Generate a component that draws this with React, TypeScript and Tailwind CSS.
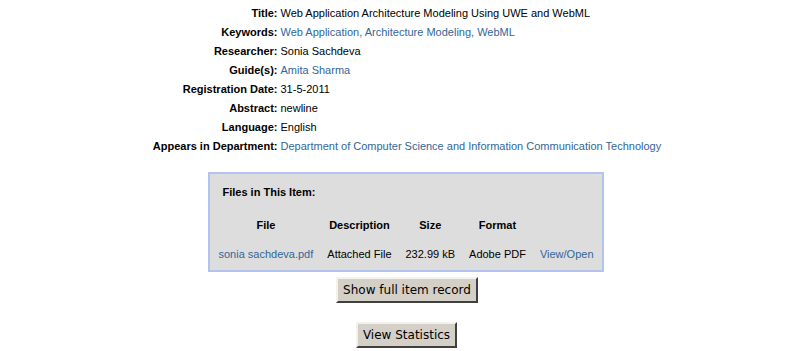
import React from "react";

const rows: { label: string; value: string; link?: boolean }[] = [
  { label: "Title:", value: "Web Application Architecture Modeling Using UWE and WebML" },
  { label: "Keywords:", value: "Web Application, Architecture Modeling, WebML", link: true },
  { label: "Researcher:", value: "Sonia Sachdeva" },
  { label: "Guide(s):", value: "Amita Sharma", link: true },
  { label: "Registration Date:", value: "31-5-2011" },
  { label: "Abstract:", value: "newline" },
  { label: "Language:", value: "English" },
  {
    label: "Appears in Department:",
    value: "Department of Computer Science and Information Communication Technology",
    link: true,
  },
];

export default function App() {
  return (
    <div
      className="w-[811px] h-[351px] bg-white text-black text-[11px] overflow-hidden flex flex-col items-center"
      style={{ fontFamily: '"Liberation Sans", Arial, sans-serif' }}
    >
      <table className="mt-[4px] ml-[3px] border-separate border-spacing-0">
        <tbody>
          {rows.map((r) => (
            <tr key={r.label} className="h-[19px]">
              <td className="text-right font-bold pr-[3px] whitespace-nowrap align-middle">{r.label}</td>
              <td className={"whitespace-nowrap align-middle " + (r.link ? "text-[#336699]" : "")}>{r.value}</td>
            </tr>
          ))}
        </tbody>
      </table>

      <div className="mt-[16px] w-[396px] h-[100px] border-2 border-[#b3c3ef] bg-[#dddddd] px-[2px] pt-[11px]">
        <div className="font-bold pl-[11px] h-[14px] leading-[14px]">Files in This Item:</div>
        <table className="mt-[13px] border-separate border-spacing-0">
          <tbody>
            <tr className="h-[26px] font-bold text-center">
              <td className="px-[7px] align-middle">File</td>
              <td className="px-[7px] align-middle">Description</td>
              <td className="px-[7px] align-middle">Size</td>
              <td className="px-[7px] align-middle">Format</td>
              <td className="px-[7px]"></td>
            </tr>
            <tr className="h-[31px] text-center">
              <td className="px-[7px] pt-[2px] align-middle whitespace-nowrap text-[#336699]">sonia sachdeva.pdf</td>
              <td className="px-[7px] pt-[2px] align-middle whitespace-nowrap">Attached File</td>
              <td className="px-[7px] pt-[2px] align-middle whitespace-nowrap">232.99 kB</td>
              <td className="px-[7px] pt-[2px] align-middle whitespace-nowrap">Adobe PDF</td>
              <td className="px-[7px] pt-[2px] align-middle whitespace-nowrap text-[#336699]">View/Open</td>
            </tr>
          </tbody>
        </table>
      </div>

      <button
        className="mt-[5px] ml-[3px] h-[26px] px-[5px] bg-[#d4d0c8] border-2 border-t-[#f4f2ee] border-l-[#f4f2ee] border-b-[#404040] border-r-[#404040] text-[12px] text-black"
        style={{ fontFamily: '"DejaVu Sans", sans-serif' }}
      >
        Show full item record
      </button>
      <button
        className="mt-[19px] ml-[2px] h-[26px] px-[5px] bg-[#d4d0c8] border-2 border-t-[#f4f2ee] border-l-[#f4f2ee] border-b-[#404040] border-r-[#404040] text-[12px] text-black"
        style={{ fontFamily: '"DejaVu Sans", sans-serif' }}
      >
        View Statistics
      </button>
    </div>
  );
}
